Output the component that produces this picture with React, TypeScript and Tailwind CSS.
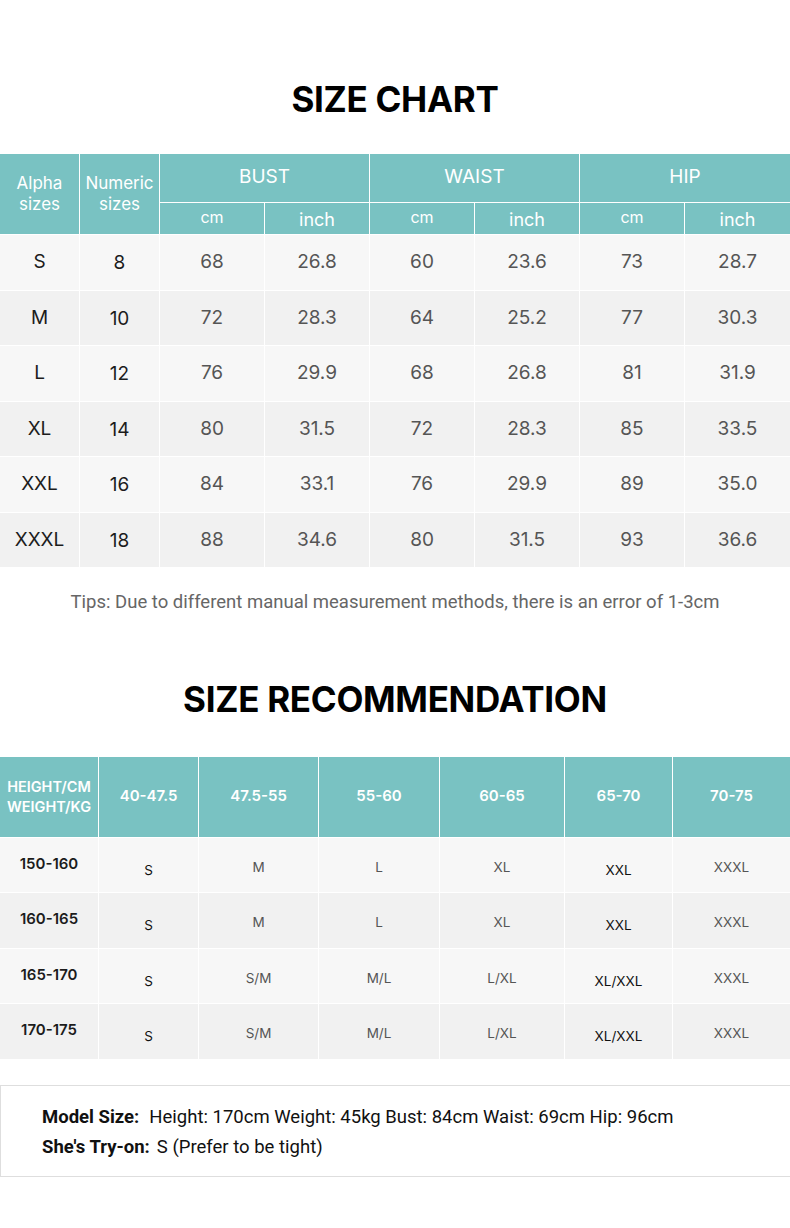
const teal = 'bg-[#79c2c2]';

const chartRows = [
  ['S', '8', '68', '26.8', '60', '23.6', '73', '28.7'],
  ['M', '10', '72', '28.3', '64', '25.2', '77', '30.3'],
  ['L', '12', '76', '29.9', '68', '26.8', '81', '31.9'],
  ['XL', '14', '80', '31.5', '72', '28.3', '85', '33.5'],
  ['XXL', '16', '84', '33.1', '76', '29.9', '89', '35.0'],
  ['XXXL', '18', '88', '34.6', '80', '31.5', '93', '36.6'],
];

const recHeads = ['40-47.5', '47.5-55', '55-60', '60-65', '65-70', '70-75'];
const recRows = [
  ['150-160', 'S', 'M', 'L', 'XL', 'XXL', 'XXXL'],
  ['160-165', 'S', 'M', 'L', 'XL', 'XXL', 'XXXL'],
  ['165-170', 'S', 'S/M', 'M/L', 'L/XL', 'XL/XXL', 'XXXL'],
  ['170-175', 'S', 'S/M', 'M/L', 'L/XL', 'XL/XXL', 'XXXL'],
];

// columns 1 and 5 are darker + nudged down, like the source image
const recDark = [false, true, false, false, false, true, false];

function Title({ children }: { children: React.ReactNode }) {
  return (
    <h2 className="text-center text-[35px] font-bold tracking-[-0.3px] text-black leading-none">
      {children}
    </h2>
  );
}

export default function App() {
  return (
    <div className="w-[790px] min-h-[1228px] bg-white font-['Inter',sans-serif]">
      <div className="pt-[82px] pb-[37px]">
        <Title>SIZE CHART</Title>
      </div>

      {/* size chart */}
      <div className="grid grid-cols-[79px_79px_104px_104px_104px_104px_104px_105px] grid-rows-[48px_31px] auto-rows-[54.5px] gap-px bg-white">
        <div className={`${teal} row-span-2 flex flex-col items-center justify-center text-white text-[17px] leading-[21px]`}>
          <span>Alpha</span>
          <span>sizes</span>
        </div>
        <div className={`${teal} row-span-2 flex flex-col items-center justify-center text-white text-[17px] leading-[21px]`}>
          <span>Numeric</span>
          <span>sizes</span>
        </div>
        {['BUST', 'WAIST', 'HIP'].map(h => (
          <div key={h} className={`${teal} col-span-2 flex items-center justify-center text-white text-[19px] pb-[1px]`}>
            {h}
          </div>
        ))}
        {['cm', 'inch', 'cm', 'inch', 'cm', 'inch'].map((u, i) => (
          <div key={i} className={`${teal} flex items-center justify-center text-white ${u === 'cm' ? 'text-[16px] pb-[4px]' : 'text-[18px] pt-[1px]'}`}>
            {u}
          </div>
        ))}
        {chartRows.map((r, ri) =>
          r.map((c, ci) => (
            <div
              key={`${ri}-${ci}`}
              className={`flex items-center justify-center text-[19px] ${ri % 2 ? 'bg-[#f1f1f1]' : 'bg-[#f7f7f7]'} ${ci < 2 ? 'text-[#1c1c1c]' : 'text-[#555]'} ${ci === 1 ? 'pt-[2px]' : ''}`}
            >
              {c}
            </div>
          ))
        )}
      </div>

      <p className="mt-[22px] text-center font-['Roboto',sans-serif] text-[18.5px] text-[#666]">
        Tips: Due to different manual measurement methods, there is an error of 1-3cm
      </p>

      <div className="pt-[65px] pb-[40px]">
        <Title>SIZE RECOMMENDATION</Title>
      </div>

      {/* recommendation */}
      <div className="grid grid-cols-[98px_99px_119px_120px_124px_107px_117px] grid-rows-[80px] auto-rows-[54.5px] gap-px bg-white">
        <div className={`${teal} flex flex-col items-center justify-center text-white text-[14.5px] font-semibold leading-[20px]`}>
          <span>HEIGHT/CM</span>
          <span>WEIGHT/KG</span>
        </div>
        {recHeads.map(h => (
          <div key={h} className={`${teal} flex items-center justify-center text-white text-[15px] font-semibold pb-[2px]`}>
            {h}
          </div>
        ))}
        {recRows.map((r, ri) =>
          r.map((c, ci) => (
            <div
              key={`${ri}-${ci}`}
              className={`flex items-center justify-center ${ri % 2 ? 'bg-[#f1f1f1]' : 'bg-[#f7f7f7]'} ${
                ci === 0
                  ? 'text-[15px] font-semibold text-[#1c1c1c] pb-[2px]'
                  : recDark[ci]
                    ? 'text-[13.5px] text-[#111] pt-[10px]'
                    : 'text-[13.5px] text-[#555] pt-[4px]'
              } ${ci === 1 ? 'pt-[5px]' : ''}`}
            >
              {c}
            </div>
          ))
        )}
      </div>

      <div className="mt-[26px] border border-[#dedede] border-r-0 h-[92px] pl-[41px] pt-[16px] font-['Roboto',sans-serif] text-[18.5px] text-[#111] leading-[30px]">
        <div>
          <span className="font-bold mr-[10px]">Model Size:</span>
          Height: 170cm Weight: 45kg Bust: 84cm Waist: 69cm Hip: 96cm
        </div>
        <div>
          <span className="font-bold mr-[7px]">She's Try-on:</span>
          S (Prefer to be tight)
        </div>
      </div>
    </div>
  );
}
